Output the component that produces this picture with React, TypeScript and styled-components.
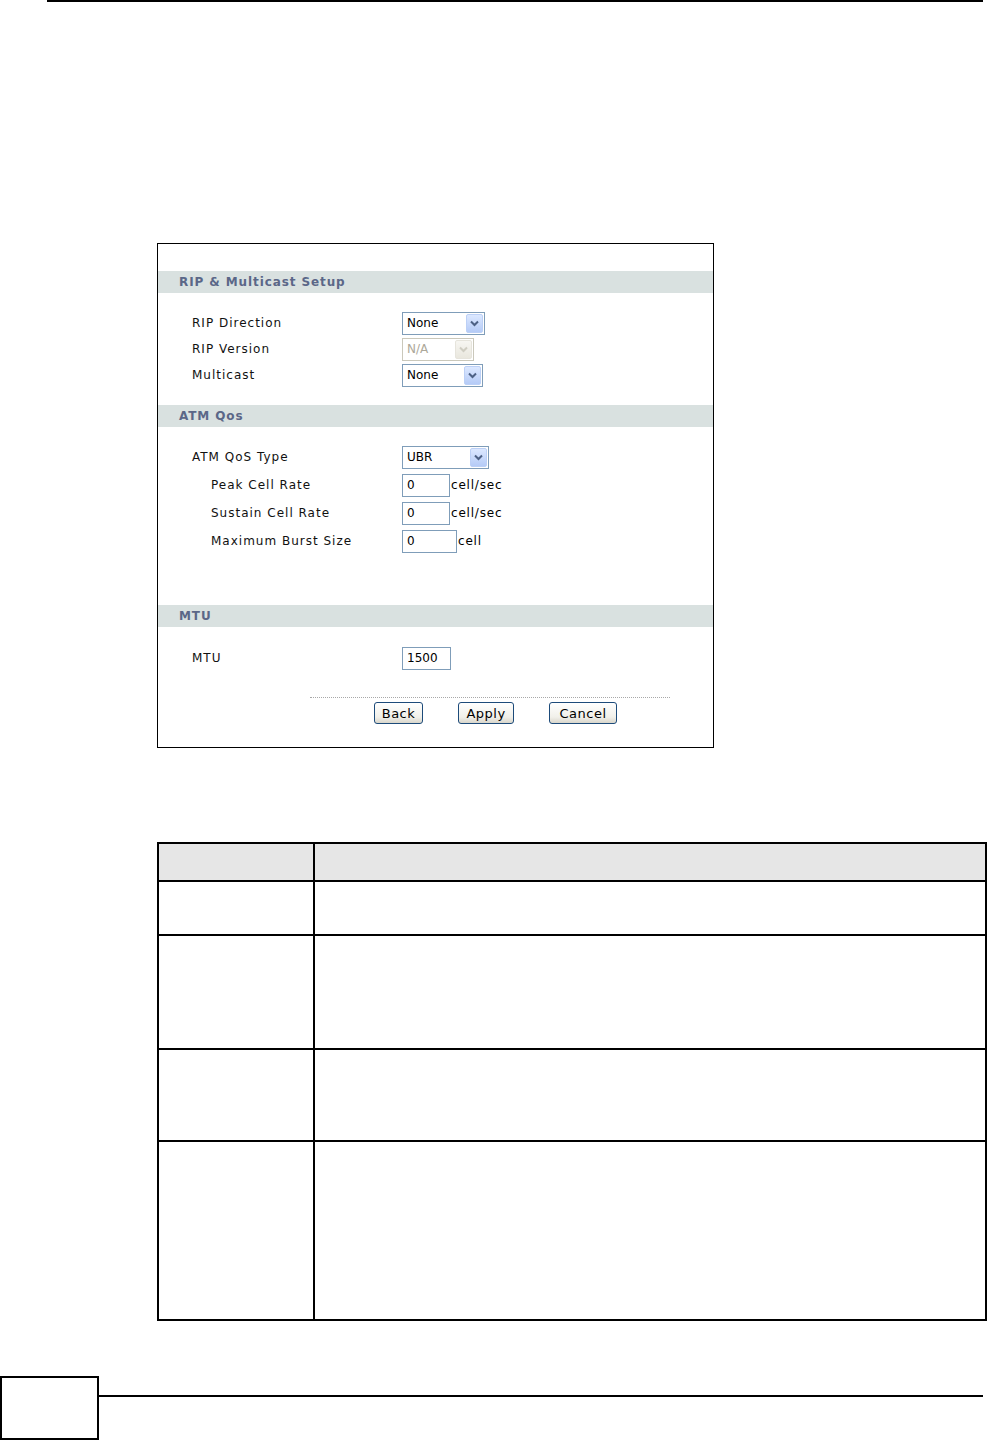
import React from 'react'
import styled, { createGlobalStyle } from 'styled-components'

const GlobalStyle = createGlobalStyle`
  html, body {
    margin: 0;
    padding: 0;
    background: #fff;
  }
`

const Page = styled.div`
  width: 987px;
  height: 1440px;
  overflow: hidden;
  display: flex;
  flex-direction: column;
  background: #fff;
  font-family: "DejaVu Sans", Verdana, sans-serif;

  & > * {
    flex-shrink: 0;
  }
`

const TopRule = styled.div`
  margin-left: 47px;
  width: 936px;
  height: 2px;
  background: #000;
`

const Panel = styled.div`
  margin-top: 241px;
  margin-left: 157px;
  width: 557px;
  height: 505px;
  box-sizing: border-box;
  border: 1px solid #000;
  padding-top: 27px;
  display: flex;
  flex-direction: column;
`

const Band = styled.div`
  height: 22px;
  flex-shrink: 0;
  background: #d9e1e0;
  color: #5b6788;
  font-weight: bold;
  font-size: 12px;
  letter-spacing: 0.9px;
  display: flex;
  align-items: center;
  padding-left: 21px;
`

const Body = styled.div<{ $top: number; $bottom: number }>`
  padding: ${p => p.$top}px 0 ${p => p.$bottom}px 34px;
  display: flex;
  flex-direction: column;
`

const Row = styled.div<{ $h: number }>`
  height: ${p => p.$h}px;
  display: flex;
  align-items: center;
`

const Label = styled.div<{ $indent?: boolean }>`
  width: ${p => (p.$indent ? 191 : 210)}px;
  padding-left: ${p => (p.$indent ? 19 : 0)}px;
  font-size: 12px;
  letter-spacing: 1px;
  color: #111;
`

const SelectBox = styled.div<{ $w: number; $disabled?: boolean }>`
  width: ${p => p.$w}px;
  height: 23px;
  box-sizing: border-box;
  border: 1px solid ${p => (p.$disabled ? '#cac8bb' : '#7f9db9')};
  background: #fff;
  display: flex;
  align-items: center;
  justify-content: space-between;
  padding: 1px 1px 1px 4px;
  font-size: 12px;
  color: ${p => (p.$disabled ? '#aca899' : '#000')};
`

const ArrowButton = styled.div<{ $disabled?: boolean }>`
  width: 17px;
  height: 19px;
  box-sizing: border-box;
  border: 1px solid ${p => (p.$disabled ? '#e6e4dc' : '#bcd0f6')};
  border-radius: 2px;
  background: ${p =>
    p.$disabled
      ? 'linear-gradient(#f7f6f2, #e9e7de)'
      : 'linear-gradient(#dce8ff, #b5cbf7)'};
  display: flex;
  align-items: center;
  justify-content: center;
`

const TextInput = styled.div<{ $w: number }>`
  width: ${p => p.$w}px;
  height: 23px;
  box-sizing: border-box;
  border: 1px solid #7f9db9;
  background: #fff;
  display: flex;
  align-items: center;
  padding-left: 4px;
  font-size: 12px;
  color: #000;
`

const Unit = styled.span`
  margin-left: 1px;
  font-size: 12px;
  letter-spacing: 0.8px;
  color: #000;
`

const DottedLine = styled.div`
  margin-top: 26px;
  margin-left: 152px;
  width: 360px;
  border-top: 1px dotted #a8a8a8;
`

const ButtonRow = styled.div`
  margin-top: 4px;
  padding-left: 216px;
  display: flex;
  gap: 35px;
`

const Button = styled.div<{ $w: number }>`
  width: ${p => p.$w}px;
  height: 22px;
  box-sizing: border-box;
  border: 1px solid #1d4b7a;
  border-radius: 3px;
  background: linear-gradient(#ffffff, #f1f0ea 70%, #d9d6cb);
  display: flex;
  align-items: center;
  justify-content: center;
  font-size: 13px;
  letter-spacing: 0.5px;
  color: #000;
`

const Table = styled.div`
  margin-top: 94px;
  margin-left: 157px;
  width: 830px;
  box-sizing: border-box;
  border: 2px solid #000;
  display: flex;
  flex-direction: column;
`

const TRow = styled.div<{ $h: number; $head?: boolean }>`
  height: ${p => p.$h}px;
  box-sizing: border-box;
  display: grid;
  grid-template-columns: 154px 1fr;
  background: ${p => (p.$head ? '#e6e6e6' : '#fff')};
  & + & {
    border-top: 2px solid #000;
  }
`

const TCell = styled.div`
  & + & {
    border-left: 2px solid #000;
  }
`

const Footer = styled.div`
  margin-top: 55px;
  display: flex;
  align-items: flex-start;
`

const PageBox = styled.div`
  width: 99px;
  height: 64px;
  box-sizing: border-box;
  border: 2px solid #000;
`

const FooterRule = styled.div`
  margin-top: 19px;
  width: 884px;
  height: 2px;
  background: #000;
`

const Chevron = ({ disabled }: { disabled?: boolean }) => (
  <svg width='11' height='9' viewBox='0 0 11 9'>
    <path
      d='M2 2.5 L5.5 6 L9 2.5'
      fill='none'
      stroke={disabled ? '#cfcdc2' : '#4d6185'}
      strokeWidth='2'
    />
  </svg>
)

const Select = ({ value, w, disabled }: { value: string; w: number; disabled?: boolean }) => (
  <SelectBox $w={w} $disabled={disabled}>
    <span>{value}</span>
    <ArrowButton $disabled={disabled}>
      <Chevron disabled={disabled} />
    </ArrowButton>
  </SelectBox>
)

const tableRows = [54, 114, 92, 179]

const App: React.FC = () => {
  return (
    <Page>
      <GlobalStyle />
      <TopRule />

      <Panel>
        <Band>RIP &amp; Multicast Setup</Band>
        <Body $top={17} $bottom={17}>
          <Row $h={26}>
            <Label>RIP Direction</Label>
            <Select value='None' w={83} />
          </Row>
          <Row $h={26}>
            <Label>RIP Version</Label>
            <Select value='N/A' w={72} disabled />
          </Row>
          <Row $h={26}>
            <Label>Multicast</Label>
            <Select value='None' w={81} />
          </Row>
        </Body>

        <Band>ATM Qos</Band>
        <Body $top={16} $bottom={50}>
          <Row $h={28}>
            <Label>ATM QoS Type</Label>
            <Select value='UBR' w={87} />
          </Row>
          <Row $h={28}>
            <Label $indent>Peak Cell Rate</Label>
            <TextInput $w={48}>0</TextInput>
            <Unit>cell/sec</Unit>
          </Row>
          <Row $h={28}>
            <Label $indent>Sustain Cell Rate</Label>
            <TextInput $w={48}>0</TextInput>
            <Unit>cell/sec</Unit>
          </Row>
          <Row $h={28}>
            <Label $indent>Maximum Burst Size</Label>
            <TextInput $w={55}>0</TextInput>
            <Unit>cell</Unit>
          </Row>
        </Body>

        <Band>MTU</Band>
        <Body $top={18} $bottom={0}>
          <Row $h={26}>
            <Label>MTU</Label>
            <TextInput $w={49}>1500</TextInput>
          </Row>
        </Body>
        <DottedLine />
        <ButtonRow>
          <Button $w={49}>Back</Button>
          <Button $w={56}>Apply</Button>
          <Button $w={68}>Cancel</Button>
        </ButtonRow>
      </Panel>

      <Table>
        <TRow $h={36} $head>
          <TCell />
          <TCell />
        </TRow>
        {tableRows.map((h, i) => (
          <TRow key={i} $h={h}>
            <TCell />
            <TCell />
          </TRow>
        ))}
      </Table>

      <Footer>
        <PageBox />
        <FooterRule />
      </Footer>
    </Page>
  )
}

export default App
